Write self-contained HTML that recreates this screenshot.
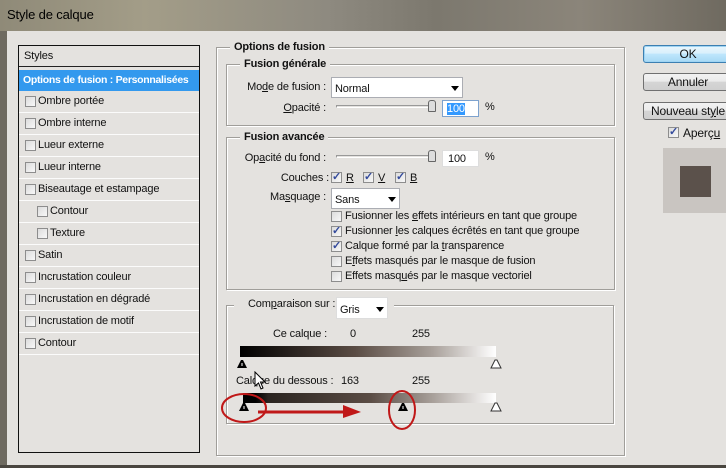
<!DOCTYPE html>
<html><head><meta charset="utf-8"><style>
*{margin:0;padding:0;box-sizing:border-box}
body{width:726px;height:468px;overflow:hidden;position:relative;background:#e4e2df;font-family:"Liberation Sans",sans-serif;font-size:11px;color:#111;letter-spacing:-0.15px}
.a{position:absolute;white-space:nowrap}
.r{position:absolute;white-space:nowrap;right:400px;text-align:right}
.title{left:0;top:0;width:726px;height:31px;background:linear-gradient(90deg,#8f8a78 0%,#a39d88 20%,#8e8a80 45%,#7c786e 60%,#8b857a 80%,#6f6a60 100%)}
.frame{border:1px solid #a09e9a;box-shadow:1px 1px 0 #fff inset,1px 1px 0 #fff}
.leg{background:#e4e2df;padding:0 4px;font-weight:bold;font-size:11px}
.cb{position:absolute;width:11px;height:11px;border:1px solid #8d8d8d;background:linear-gradient(135deg,#dcdcdc,#f8f8f8)}
.ck::after{content:"✓";position:absolute;left:0;top:-3px;font-size:11px;font-weight:bold;color:#334a9c}
.row{position:absolute;left:19px;width:180px;height:22px;border-bottom:1px solid #fbfbfb}
.row span{position:absolute;top:4px}
.sel{position:absolute;background:#fff;border:1px solid #abadb3}
.arr{position:absolute;width:0;height:0;border-left:4px solid transparent;border-right:4px solid transparent;border-top:5px solid #000}
.btn{position:absolute;left:643px;width:90px;height:18px;border:1px solid #707070;border-radius:3px;background:linear-gradient(#f2f2f2,#ebebeb 45%,#d5d5d5 50%,#cfcfcf);text-align:center;font-size:12px;line-height:16px}
</style></head><body>
<div class="a title"></div>
<div class="a" style="left:7px;top:7px;font-size:13px;color:#000">Style de calque</div>
<div class="a" style="left:0;top:31px;width:7px;height:437px;background:#6e6a60"></div>
<div class="a" style="left:0;top:465px;width:726px;height:3px;background:#4a4640"></div>

<!-- Styles list -->
<div class="a" style="left:18px;top:45px;width:182px;height:408px;border:1px solid #111;background:#e4e2df"></div>
<div class="a" style="left:24px;top:50px">Styles</div>
<div class="a" style="left:19px;top:66px;width:180px;height:1px;background:#222"></div>
<div class="a" style="left:19px;top:70px;width:180px;height:21px;background:#3399ee;color:#fff;font-weight:bold;padding:4px 0 0 4px;font-size:10.5px;letter-spacing:-0.3px;overflow:hidden">Options de fusion : Personnalisées</div>
<div class="row" style="top:91px"><div class="cb" style="left:6px;top:5px"></div><span style="left:19px">Ombre portée</span></div>
<div class="row" style="top:113px"><div class="cb" style="left:6px;top:5px"></div><span style="left:19px">Ombre interne</span></div>
<div class="row" style="top:135px"><div class="cb" style="left:6px;top:5px"></div><span style="left:19px">Lueur externe</span></div>
<div class="row" style="top:157px"><div class="cb" style="left:6px;top:5px"></div><span style="left:19px">Lueur interne</span></div>
<div class="row" style="top:179px"><div class="cb" style="left:6px;top:5px"></div><span style="left:19px">Biseautage et estampage</span></div>
<div class="row" style="top:201px"><div class="cb" style="left:18px;top:5px"></div><span style="left:31px">Contour</span></div>
<div class="row" style="top:223px"><div class="cb" style="left:18px;top:5px"></div><span style="left:31px">Texture</span></div>
<div class="row" style="top:245px"><div class="cb" style="left:6px;top:5px"></div><span style="left:19px">Satin</span></div>
<div class="row" style="top:267px"><div class="cb" style="left:6px;top:5px"></div><span style="left:19px">Incrustation couleur</span></div>
<div class="row" style="top:289px"><div class="cb" style="left:6px;top:5px"></div><span style="left:19px">Incrustation en dégradé</span></div>
<div class="row" style="top:311px"><div class="cb" style="left:6px;top:5px"></div><span style="left:19px">Incrustation de motif</span></div>
<div class="row" style="top:333px"><div class="cb" style="left:6px;top:5px"></div><span style="left:19px">Contour</span></div>

<!-- Options de fusion -->
<div class="a frame" style="left:216px;top:47px;width:409px;height:409px"></div>
<div class="a leg" style="left:230px;top:41px">Options de fusion</div>
<div class="a frame" style="left:226px;top:64px;width:389px;height:62px"></div>
<div class="a leg" style="left:240px;top:58px">Fusion générale</div>
<div class="r" style="top:81px">Mo<u>d</u>e de fusion :</div>
<div class="sel" style="left:331px;top:77px;width:132px;height:21px"><span class="a" style="left:3px;top:5px">Normal</span><div class="arr" style="left:119px;top:8px"></div></div>
<div class="r" style="top:102px"><u>O</u>pacité :</div>
<div class="a" style="left:336px;top:105px;width:94px;height:3px;border:1px solid #999;border-bottom-color:#fff"></div>
<div class="a" style="left:428px;top:100px;width:8px;height:12px;border:1px solid #666;border-radius:3px 3px 1px 1px;background:#ddd"></div>
<div class="sel" style="left:442px;top:100px;width:37px;height:17px;border-color:#7da2ce"><span class="a" style="left:4px;top:2px;background:#3399ff;color:#fff">100</span></div>
<div class="a" style="left:485px;top:101px">%</div>

<div class="a frame" style="left:226px;top:137px;width:389px;height:153px"></div>
<div class="a leg" style="left:240px;top:131px">Fusion avancée</div>
<div class="r" style="top:152px">Op<u>a</u>cité du fond :</div>
<div class="a" style="left:336px;top:155px;width:94px;height:3px;border:1px solid #999;border-bottom-color:#fff"></div>
<div class="a" style="left:428px;top:150px;width:8px;height:12px;border:1px solid #666;border-radius:3px 3px 1px 1px;background:#ddd"></div>
<div class="sel" style="left:442px;top:150px;width:37px;height:17px;border-color:#ddd"><span class="a" style="left:5px;top:2px">100</span></div>
<div class="a" style="left:485px;top:151px">%</div>
<div class="r" style="top:172px;right:397px">Couches :</div>
<div class="cb ck" style="left:331px;top:172px"></div><div class="a" style="left:346px;top:172px"><u>R</u></div>
<div class="cb ck" style="left:363px;top:172px"></div><div class="a" style="left:378px;top:172px"><u>V</u></div>
<div class="cb ck" style="left:395px;top:172px"></div><div class="a" style="left:410px;top:172px"><u>B</u></div>
<div class="r" style="top:191px">Ma<u>s</u>quage :</div>
<div class="sel" style="left:331px;top:188px;width:69px;height:21px"><span class="a" style="left:3px;top:5px">Sans</span><div class="arr" style="left:56px;top:8px"></div></div>
<div class="cb" style="left:331px;top:211px"></div><div class="a" style="left:345px;top:210px">Fusionner les <u>e</u>ffets intérieurs en tant que groupe</div>
<div class="cb ck" style="left:331px;top:226px"></div><div class="a" style="left:345px;top:225px">Fusionner <u>l</u>es calques écrêtés en tant que groupe</div>
<div class="cb ck" style="left:331px;top:241px"></div><div class="a" style="left:345px;top:240px">Calque formé par la <u>t</u>ransparence</div>
<div class="cb" style="left:331px;top:256px"></div><div class="a" style="left:345px;top:255px">E<u>f</u>fets masqués par le masque de fusion</div>
<div class="cb" style="left:331px;top:271px"></div><div class="a" style="left:345px;top:270px">Effets masq<u>u</u>és par le masque vectoriel</div>

<!-- Comparaison -->
<div class="a frame" style="left:226px;top:305px;width:388px;height:119px"></div>
<div class="a" style="left:234px;top:300px;width:160px;height:10px;background:#e4e2df"></div>
<div class="a" style="left:248px;top:298px">Com<u>p</u>araison sur :</div>
<div class="sel" style="left:336px;top:297px;width:52px;height:22px;border-color:#ddd"><span class="a" style="left:3px;top:6px">Gris</span><div class="arr" style="left:39px;top:9px"></div></div>
<div class="r" style="top:328px;right:399px">Ce calque :</div>
<div class="a" style="left:350px;top:328px">0</div>
<div class="a" style="left:412px;top:328px">255</div>
<div class="a" style="left:240px;top:346px;width:256px;height:11px;background:linear-gradient(90deg,#000,#5a4c44 45%,#a8a09a 75%,#fff)"></div>
<svg class="a" style="left:236px;top:359px" width="12" height="10"><path d="M1 9 L5 1 L7 1 L11 9 Z" fill="#000"/><rect x="5.5" y="4" width="1" height="3" fill="#fff"/></svg>
<svg class="a" style="left:490px;top:359px" width="12" height="10"><path d="M1 9 L5 1 L7 1 L11 9 Z" fill="#fff" stroke="#333" stroke-width="1"/></svg>
<div class="a" style="left:236px;top:375px">Calque du dessous :</div>
<div class="a" style="left:341px;top:375px">163</div>
<div class="a" style="left:412px;top:375px">255</div>
<div class="a" style="left:243px;top:393px;width:253px;height:10px;background:linear-gradient(90deg,#000 0,#000 5%,#2a2420 10%,#5a4c44 50%,#a8a09a 75%,#fff)"></div>
<svg class="a" style="left:238px;top:402px" width="12" height="10"><path d="M1 9 L5 1 L7 1 L11 9 Z" fill="#000"/><rect x="5.5" y="4" width="1" height="3" fill="#fff"/></svg>
<svg class="a" style="left:397px;top:402px" width="12" height="10"><path d="M1 9 L5 1 L7 1 L11 9 Z" fill="#000"/><rect x="5.5" y="4" width="1" height="3" fill="#fff"/></svg>
<svg class="a" style="left:490px;top:402px" width="12" height="10"><path d="M1 9 L5 1 L7 1 L11 9 Z" fill="#fff" stroke="#333" stroke-width="1"/></svg>
<svg class="a" style="left:215px;top:385px" width="220" height="50">
<ellipse cx="29" cy="23" rx="22" ry="14" fill="none" stroke="#c01818" stroke-width="2"/>
<ellipse cx="187" cy="25" rx="13" ry="19" fill="none" stroke="#c01818" stroke-width="2"/>
<path d="M43 27 L130 27" stroke="#c01818" stroke-width="3"/>
<path d="M128 20 L146 27 L128 33 Z" fill="#c01818"/>
</svg>
<svg class="a" style="left:254px;top:371px" width="14" height="20"><path d="M1 1 L1 15 L4.5 12 L7 18 L9 17 L6.5 11 L11 11 Z" fill="#fff" stroke="#000" stroke-width="1"/></svg>

<!-- right -->
<div class="btn" style="top:45px;border-color:#3c7fb1;background:linear-gradient(#eaf6fd,#d9f0fc 45%,#bee6fd 50%,#a7d9f5);box-shadow:0 0 0 1px #9fd4f3 inset">OK</div>
<div class="btn" style="top:73px">Annuler</div>
<div class="btn" style="top:102px">Nouveau st<u>y</u>le</div>
<div class="cb ck" style="left:668px;top:127px"></div>
<div class="a" style="left:683px;top:126px;font-size:12px">Aperç<u>u</u></div>
<div class="a" style="left:663px;top:148px;width:63px;height:65px;background:#c9c5c1"></div>
<div class="a" style="left:680px;top:166px;width:31px;height:31px;background:#5b514b"></div>
</body></html>
